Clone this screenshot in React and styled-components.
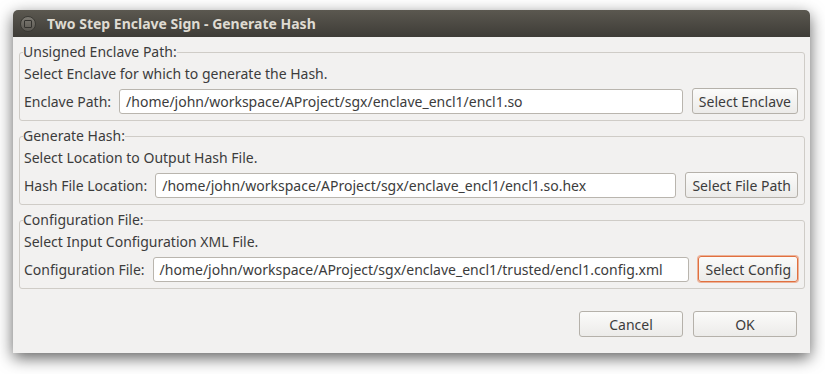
import React from "react";
import styled, { createGlobalStyle } from "styled-components";

const Global = createGlobalStyle`
  html, body { margin: 0; padding: 0; background: #ffffff; }
  body { font-family: "Noto Sans", "Open Sans", sans-serif; }
  * { box-sizing: border-box; }
`;

const Page = styled.div`
  width: 825px;
  height: 374px;
  padding: 10px 0 0 13px;
  overflow: hidden;
`;

const Window = styled.div`
  width: 797px;
  height: 343px;
  display: flex;
  flex-direction: column;
  border-radius: 5px 5px 0 0;
  box-shadow: 0 5px 16px rgba(0, 0, 0, 0.62);
`;

const TitleBar = styled.div`
  height: 27px;
  flex: 0 0 27px;
  display: flex;
  align-items: center;
  gap: 11px;
  padding-left: 7px;
  border-radius: 5px 5px 0 0;
  background: linear-gradient(#5b5850, #3e3c37);
  color: #dfdbd2;
  font-weight: bold;
  font-size: 14px;
`;

const CloseBtn = styled.span`
  width: 16px;
  height: 16px;
  border-radius: 50%;
  background: linear-gradient(#7d7a73, #5a5751);
  border: 1px solid #3a3934;
  display: flex;
  align-items: center;
  justify-content: center;
  &::after {
    content: "";
    width: 6px;
    height: 6px;
    border: 1px solid #34332f;
    border-radius: 1px;
  }
`;

const Body = styled.div`
  flex: 1;
  background: #f2f1f0;
  padding: 6px 5px 0 6px;
  display: flex;
  flex-direction: column;
  gap: 6px;
  color: #3c3c3c;
  font-size: 14px;
`;

const Group = styled.fieldset`
  margin: 0;
  padding: 0 6px 6px 4px;
  border: 1px solid #cfccc7;
  border-radius: 3px;
  display: flex;
  flex-direction: column;
`;

const Legend = styled.legend`
  padding: 0;
  margin-left: -1px;
  line-height: 18px;
  font-size: 14px;
`;

const Desc = styled.div`
  line-height: 18px;
  margin-top: 4px;
`;

const Row = styled.div`
  display: flex;
  align-items: center;
  gap: 8px;
  margin-top: 5px;
  height: 26px;
`;

const Label = styled.span`
  white-space: nowrap;
`;

const Input = styled.div`
  flex: 1;
  height: 25px;
  border: 1px solid #b9b5ae;
  border-radius: 3px;
  background: #ffffff;
  padding-left: 6px;
  display: flex;
  align-items: center;
  white-space: nowrap;
  overflow: hidden;
  margin-right: 1px;
`;

const Button = styled.button`
  font-family: inherit;
  font-size: 14px;
  color: #3c3c3c;
  height: 26px;
  padding: 0 6px;
  border-radius: 3px;
  border: 1px solid ${(p) => (p.$focus ? "#e0703f" : "#b5b1aa")};
  box-shadow: ${(p) =>
    p.$focus ? "0 0 0 1px rgba(233, 125, 80, 0.55)" : "none"};
  background: linear-gradient(#fbfbfa, #ecebe9);
  white-space: nowrap;
  width: ${(p) => (p.$w ? `${p.$w}px` : "auto")};
`;

const Footer = styled.div`
  display: flex;
  justify-content: flex-end;
  gap: 10px;
  margin-top: 16px;
  padding-right: 8px;
`;

const groups = [
  {
    legend: "Unsigned Enclave Path:",
    desc: "Select Enclave for which to generate the Hash.",
    label: "Enclave Path:",
    value: "/home/john/workspace/AProject/sgx/enclave_encl1/encl1.so",
    button: "Select Enclave",
  },
  {
    legend: "Generate Hash:",
    desc: "Select Location to Output Hash File.",
    label: "Hash File Location:",
    value: "/home/john/workspace/AProject/sgx/enclave_encl1/encl1.so.hex",
    button: "Select File Path",
  },
  {
    legend: "Configuration File:",
    desc: "Select Input Configuration XML File.",
    label: "Configuration File:",
    value:
      "/home/john/workspace/AProject/sgx/enclave_encl1/trusted/encl1.config.xml",
    button: "Select Config",
    focus: true,
  },
];

export default function App() {
  return (
    <Page>
      <Global />
      <Window>
        <TitleBar>
          <CloseBtn />
          <span>Two Step Enclave Sign - Generate Hash</span>
        </TitleBar>
        <Body>
          {groups.map((g) => (
            <Group key={g.legend}>
              <Legend>{g.legend}</Legend>
              <Desc>{g.desc}</Desc>
              <Row>
                <Label>{g.label}</Label>
                <Input>{g.value}</Input>
                <Button $focus={g.focus}>{g.button}</Button>
              </Row>
            </Group>
          ))}
          <Footer>
            <Button $w={104}>Cancel</Button>
            <Button $w={104}>OK</Button>
          </Footer>
        </Body>
      </Window>
    </Page>
  );
}
